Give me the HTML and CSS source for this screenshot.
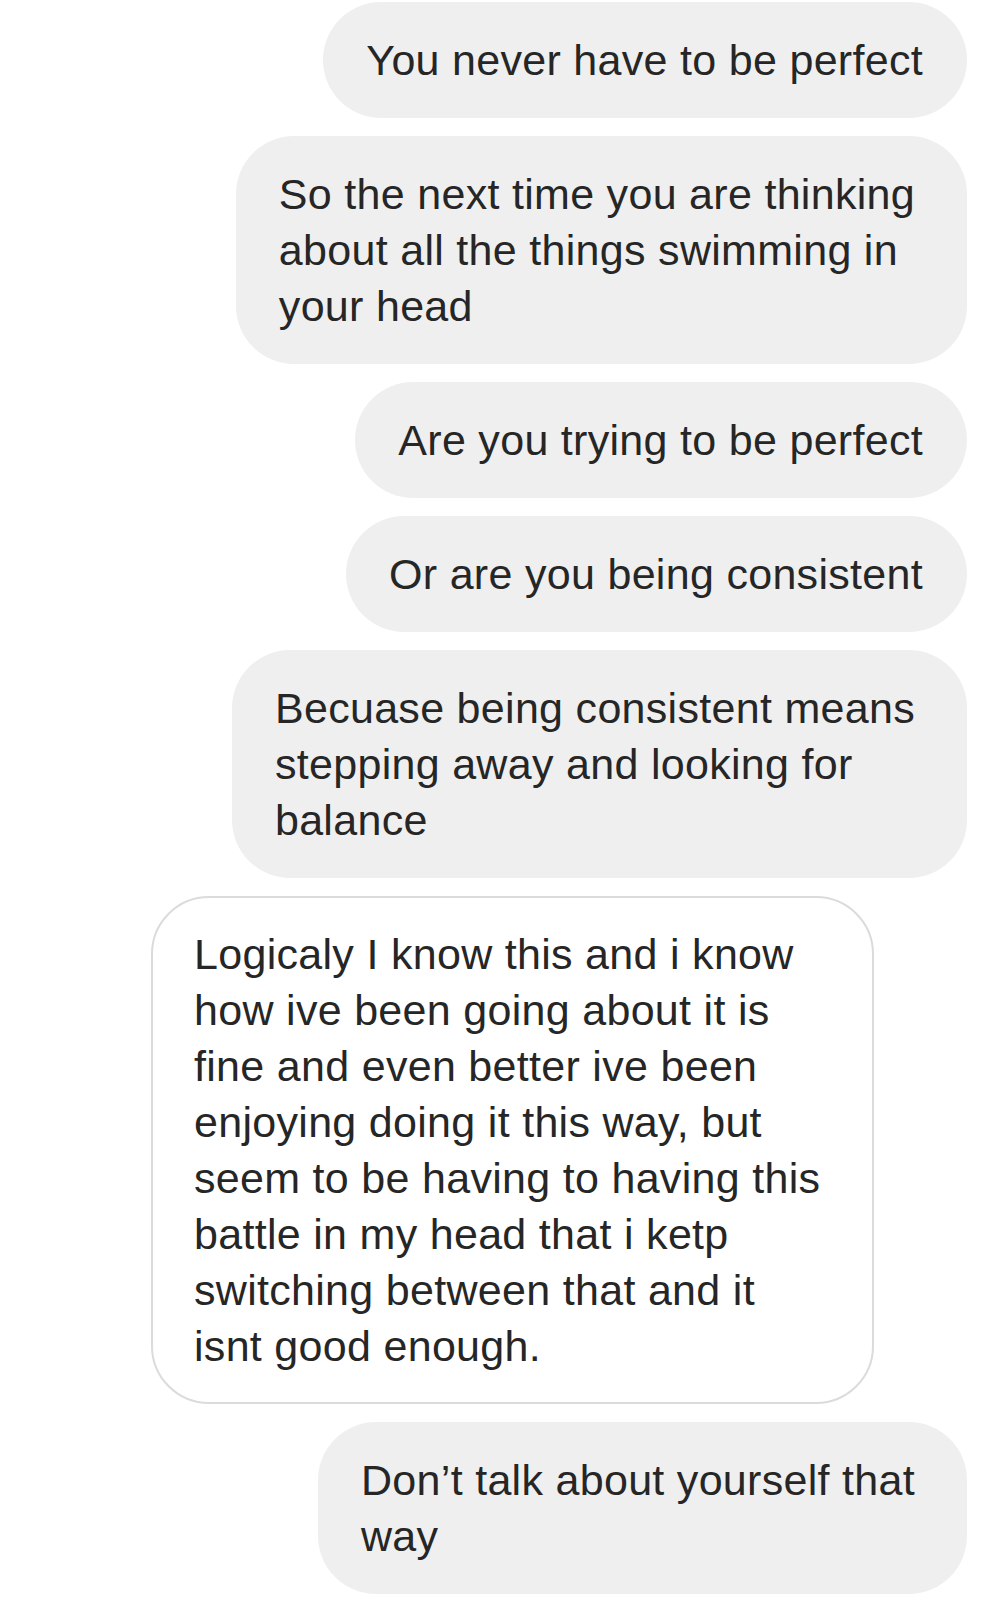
FILE: index.html
```html
<!DOCTYPE html>
<html>
<head>
<meta charset="utf-8">
<link rel="stylesheet" href="styles.css">
</head>
<body>
<div class="thread">
	<div class="msg sent">You never have to be perfect</div>
	<div class="msg sent multi">So the next time you are thinking<br>about all the things swimming in<br>your head</div>
	<div class="msg sent">Are you trying to be perfect</div>
	<div class="msg sent">Or are you being consistent</div>
	<div class="msg sent multi">Becuase being consistent means<br>stepping away and looking for<br>balance</div>
	<div class="msg received">Logicaly I know this and i know<br>how ive been going about it is<br>fine and even better ive been<br>enjoying doing it this way, but<br>seem to be having to having this<br>battle in my head that i ketp<br>switching between that and it<br>isnt good enough.</div>
	<div class="msg sent multi">Don&rsquo;t talk about yourself that<br>way</div>
</div>
</body>
</html>
```

FILE: styles.css
```css
body
{
	margin: 0;
	background: #fff;
	color: #262626;
	font-family: "Liberation Sans", Arial, sans-serif;
}
.thread
{
	display: flex;
	flex-direction: column;
	gap: 18px;
	padding: 2px 33px 0 0;
}
.msg
{
	width: fit-content;
	box-sizing: border-box;
	font-size: 43px;
	line-height: 56px;
	letter-spacing: 0.3px;
	white-space: nowrap;
	border-radius: 58px;
}
.sent
{
	align-self: flex-end;
	padding: 30px 44px 30px 43px;
	background: #efefef;
}
.sent.multi
{
	padding-right: 52px;
}
.received
{
	align-self: flex-start;
	margin-left: 151px;
	padding: 28px 52px 28px 41px;
	border: 2px solid #dbdbdb;
	background: #fff;
}
```
